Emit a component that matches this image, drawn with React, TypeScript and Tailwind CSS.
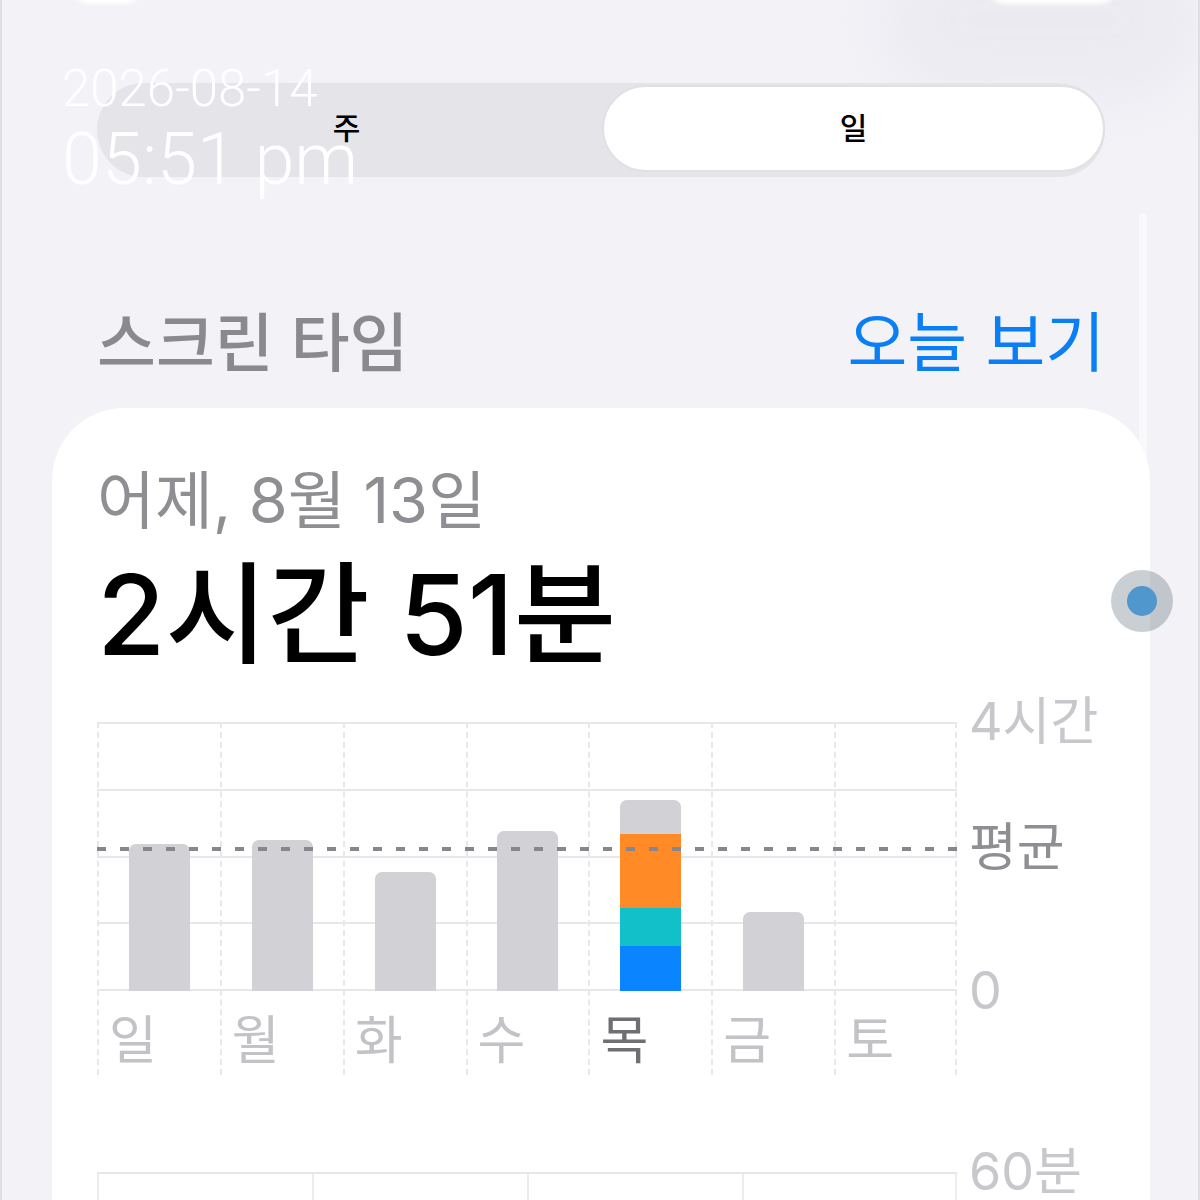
import React from "react";

const days = [
  { label: "일", h: 147 },
  { label: "월", h: 151 },
  { label: "화", h: 119 },
  { label: "수", h: 160 },
  { label: "목", h: 0, active: true },
  { label: "금", h: 79 },
  { label: "토", h: 0 },
];

const font = "font-['Inter','Noto_Sans_CJK_KR',sans-serif]";

function Bar({ h }: { h: number }) {
  if (!h) return null;
  return <div className="w-[61px] rounded-t-[7px] bg-[#d1d1d6]" style={{ height: h }} />;
}

// 목요일 막대 (앱별 색상)
function StackedBar() {
  return (
    <div className="flex w-[61px] flex-col overflow-hidden rounded-t-[7px]">
      <div className="h-[34px] bg-[#d1d1d6]" />
      <div className="h-[74px] bg-[#ff8a26]" />
      <div className="h-[38px] bg-[#12c0c9]" />
      <div className="h-[45px] bg-[#0a84ff]" />
    </div>
  );
}

function WeekChart() {
  return (
    <div className="flex">
      <div className="w-[860px] pt-[24px]">
        <div className="grid">
          {/* 가로 눈금선 */}
          <div className="col-start-1 row-start-1 flex h-[269px] flex-col">
            {[0, 1, 2, 3].map((i) => (
              <div key={i} className="flex-1 border-t-2 border-[#e6e6eb]" />
            ))}
            <div className="border-t-2 border-[#e6e6eb]" />
          </div>
          {/* 평균선 */}
          <div className="col-start-1 row-start-1 z-10 mt-[125px] h-[4px] self-start bg-[repeating-linear-gradient(to_right,#86868b_0_9px,transparent_9px_23px)]" />
          {/* 요일 열 */}
          <div className="col-start-1 row-start-1 grid grid-cols-7">
            {days.map((d, i) => (
              <div
                key={d.label}
                className={`flex flex-col border-l-2 border-dashed border-[#e8e8ec] ${i === 6 ? "border-r-2" : ""}`}
              >
                <div className="flex h-[269px] items-end justify-center">
                  {d.active ? <StackedBar /> : <Bar h={d.h} />}
                </div>
                <div
                  className={`h-[84px] pl-[10px] pt-[24px] text-[52px] leading-[52px] ${
                    d.active ? "text-[#6e6e73]" : "text-[#c2c2c7]"
                  }`}
                >
                  {d.label}
                </div>
              </div>
            ))}
          </div>
        </div>
      </div>
      <div className="flex flex-col pl-[12px] text-[52px] leading-[48px]">
        <div className="text-[#c7c7cc]">4시간</div>
        <div className="mt-[78px] text-[#8e8e93]">평균</div>
        <div className="mt-[95px] text-[#c7c7cc]">0</div>
      </div>
    </div>
  );
}

function HourChart() {
  return (
    <div className="flex">
      <div className="w-[860px] pt-[24px]">
        <div className="grid h-[80px] grid-cols-4 border-t-2 border-[#e6e6eb]">
          {[0, 1, 2, 3].map((i) => (
            <div key={i} className={`border-l-2 border-[#ececf0] ${i === 3 ? "border-r-2" : ""}`} />
          ))}
        </div>
      </div>
      <div className="pl-[12px] text-[52px] leading-[48px] text-[#c7c7cc]">60분</div>
    </div>
  );
}

export default function App() {
  return (
    <div className={`relative h-[1200px] w-[1200px] overflow-hidden border-x-2 border-[#dedee3] bg-[#f2f2f7] ${font}`}>
      {/* 상단 흐릿한 버튼 */}
      <div className="absolute -top-[30px] left-[70px] h-[34px] w-[70px] rounded-full bg-white blur-[2px]" />
      <div className="absolute -top-[60px] left-[880px] h-[160px] w-[320px] rounded-full bg-[#e6e6ec] opacity-60 blur-[30px]" />
      <div className="absolute -top-[30px] left-[985px] h-[34px] w-[130px] rounded-full bg-white blur-[2px]" />

      {/* 스크롤 표시 */}
      <div className="absolute left-[1137px] top-[213px] h-[360px] w-[8px] rounded-full bg-[#f9f9fc]" />

      <div className="relative pl-[50px] pr-[48px]">
        <div className="mx-[45px] mt-[83px] flex h-[94px] rounded-full bg-[#e4e4e9] pb-[5px] pt-[2px]">
          <div className="flex flex-1 items-center justify-center text-[30px] font-medium text-black">주</div>
          <div className="ml-[6px] flex flex-1 items-center justify-center rounded-full border-2 border-[#e0e0e5] bg-white text-[30px] font-medium text-black">
            일
          </div>
        </div>

        <div className="mx-[45px] mt-[130px] flex h-[72px] items-center justify-between leading-[72px]">
          <div className="text-[64px] font-medium text-[#8a8a8e]">스크린 타임</div>
          <div className="text-[65px] text-[#0a7ff5]">오늘 보기</div>
        </div>

        <div className="relative z-10 mt-[29px] rounded-t-[72px] bg-white px-[45px] pb-[40px] pt-[60px]">
          <div className="text-[63px] leading-[64px] text-[#8e8e93]">어제, 8월 13일</div>
          <div className="mt-[28px] text-[111px] font-medium leading-[110px] text-black">2시간 51분</div>
          <div className="mt-[28px]">
            <WeekChart />
          </div>
          <div className="mt-[73px]">
            <HourChart />
          </div>
        </div>
      </div>

      {/* 캡처 시각 */}
      <div className="absolute left-[60px] top-[62px] z-20 font-['Roboto',sans-serif] font-light text-white">
        <div className="text-[51px] leading-[54px]">2026-08-14</div>
        <div className="mt-[4px] text-[72px] leading-[80px]">05:51 pm</div>
      </div>

      {/* 터치 포인트 */}
      <div className="absolute left-[1109px] top-[570px] z-20 flex h-[62px] w-[62px] items-center justify-center rounded-full bg-[#505f6e]/30">
        <div className="h-[30px] w-[30px] rounded-full bg-[#4f97cc]" />
      </div>
    </div>
  );
}
